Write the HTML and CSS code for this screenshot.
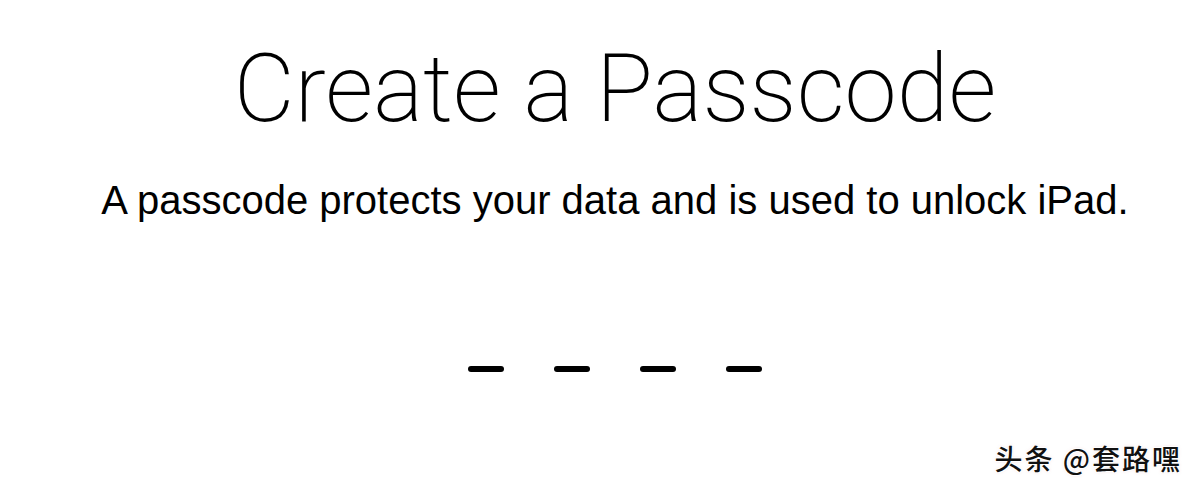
FILE: index.html
```html
<!DOCTYPE html>
<html lang="en">
<head>
  <meta charset="UTF-8">
  <meta name="viewport" content="width=device-width, initial-scale=1.0">
  <title>Create a Passcode</title>
  <link rel="stylesheet" href="styles.css">
</head>
<body>
  <div class="screen">
    <h1 class="title">Create a Passcode</h1>
    <p class="subtitle">A passcode protects your data and is used to unlock iPad.</p>
    <div class="dashes">
      <span class="dash"></span>
      <span class="dash"></span>
      <span class="dash"></span>
      <span class="dash"></span>
    </div>
  </div>
  <div class="watermark">头条 @套路嘿</div>
</body>
</html>
```

FILE: styles.css
```css
html, body {
  margin: 0;
  height: 100%;
  background: #fff;
}
body {
  position: relative;
  overflow: hidden;
  color: #000;
}
.screen {
  display: flex;
  flex-direction: column;
  align-items: center;
  padding-left: 30px;
  padding-top: 34px;
}
.title {
  margin: 0;
  font-family: Roboto, "Liberation Sans", sans-serif;
  font-weight: 200;
  font-size: 94px;
  line-height: 110px;
}
.subtitle {
  margin: 34px 0 0;
  font-family: "Liberation Sans", Arial, sans-serif;
  font-size: 40px;
  line-height: 44px;
}
.dashes {
  display: flex;
  gap: 50px;
  margin-top: 144px;
}
.dash {
  width: 36px;
  height: 6px;
  border-radius: 3px;
  background: #000;
}
.watermark {
  position: absolute;
  right: 18px;
  bottom: 14px;
  font-family: "Noto Sans CJK SC", sans-serif;
  font-size: 28px;
  font-weight: 500;
  letter-spacing: 2px;
  color: #111;
  text-shadow: 1px 1px 0 #fff, -1px -1px 0 #fff, 1px -1px 0 #fff, -1px 1px 0 #fff, 0 0 3px rgba(230, 140, 150, 0.5);
}
```
